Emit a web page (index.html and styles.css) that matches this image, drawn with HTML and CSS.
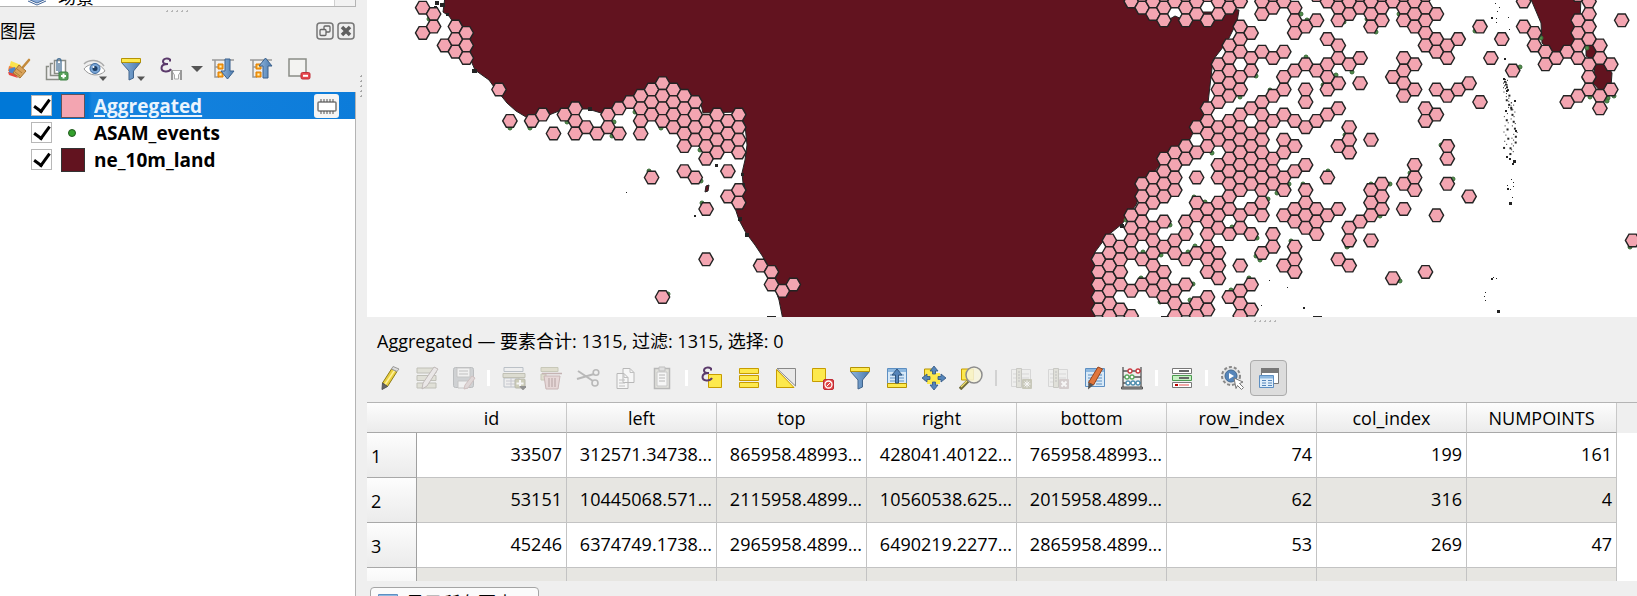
FILE: index.html
```html
<!DOCTYPE html>
<html lang="zh-CN">
<head>
<meta charset="utf-8">
<title>Aggregated</title>
<link rel="stylesheet" href="styles.css">
</head>
<body>
<svg class="defs" aria-hidden="true">
  <defs>
    <linearGradient id="blue" x1="0" x2="1"><stop offset="0" stop-color="#8fb6de"/><stop offset="1" stop-color="#4a79ad"/></linearGradient>
    <g id="funnel"><path d="M2.500 5.500L10 14v9l4.500-2v-7L21.500 5.500z" fill="url(#blue)" stroke="#42658c"/><path d="M2.500 1.500h19v4h-19z" fill="#fde94d" stroke="#b59304"/></g>
    <g id="caret"><path d="M0 0h8l-4 4.500z" fill="#555"/></g>
    <g id="epsilon"><path d="M11 4.500V2.500C9 1 4 1 4 4.500c0 2 2 2.500 5 2.500C5 7 2.500 8 2.500 11c0 4.500 7.500 4.500 9.500 1" fill="none" stroke="#5b3a6b" stroke-width="2"/></g>
    <g id="sheet"><path d="M2.500 3.500h19v18h-19z" fill="#d8e9f7" stroke="#5d8fc2"/><path d="M3 4h18v3H3z" fill="#8db8e0"/><path d="M5 10h6M5 13h6M5 16h6M5 19h6M13 10h6M13 13h6M13 16h6M13 19h6" stroke="#5d8fc2"/></g>
    <g id="tree"><path d="M1 3h22M4 3v17h4M4 10h4" fill="none" stroke="#999" stroke-width="1.500"/><path d="M7 7h5v5H7zM7 15h5v5H7z" fill="#f9a11b" stroke="#e07f00"/><path d="M8.500 8.500h2v2h-2zM8.500 16.500h2v2h-2z" fill="#fff3c4"/></g>
    <g id="column"><path d="M2.500 3.500h19v17h-19z" fill="#eeeeeb" stroke="#b9b9b9"/><path d="M4 8h16M4 12h16M4 16h12" stroke="#bbb"/><path d="M7.500 2.500h5v19h-5z" fill="#d0cfc0" stroke="#999990"/><path d="M9 6h2M9 9h2M9 12h2M9 15h2" stroke="#888"/></g>
  </defs>
</svg>
<div class="window">
  <aside class="side">
    <div class="browser">
      <svg class="browser-icon" viewBox="0 0 20 10"><path d="M1 3l9-5 9 5-9 4z" fill="#8fb0dc" stroke="#44679a"/><path d="M1 5l9 4 9-4" fill="none" stroke="#44679a"/></svg>
      <span class="browser-text">场景</span>
      <span class="scroll-end"></span>
    </div>
    <div class="grip"></div>
    <header class="side-title">
      <h2>图层</h2>
      <button class="mini" aria-label="浮动"><svg viewBox="0 0 18 18"><rect x="1" y="1" width="16" height="16" rx="3" fill="none" stroke="#777" stroke-width="1.500"/><rect x="8" y="4" width="6" height="6" rx="1" fill="none" stroke="#666" stroke-width="1.300"/><rect x="4" y="7.500" width="6" height="6" rx="1" fill="#efefef" stroke="#666" stroke-width="1.300"/></svg></button>
      <button class="mini" aria-label="关闭"><svg viewBox="0 0 18 18"><rect x="1" y="1" width="16" height="16" rx="3" fill="none" stroke="#777" stroke-width="1.500"/><path d="M5 5l8 8M13 5l-8 8" stroke="#606060" stroke-width="3.500"/></svg></button>
    </header>
    <div class="side-tools">
      <button class="tool" aria-label="样式"><svg viewBox="0 0 24 24"><path d="M4 4l10 4-4 6-8-3z" fill="#fbe34d"/><path d="M2 9l7 2-3 5-5-2z" fill="#f0803c"/><path d="M2 12l6-2 2 7-8 1z" fill="#4e86c9"/><path d="M1 15l7 2 3 4-9-3z" fill="#e8453c"/><path d="M16 10l6-7" stroke="#c48b3c" stroke-width="2.600" stroke-linecap="round"/><path d="M12 8l7 6-6 7-7-5z" fill="#d9a35a" stroke="#a8732c"/><path d="M8 15l5 4M10 12l5 4" stroke="#b17c34"/></svg></button>
      <button class="tool" aria-label="添加组"><svg viewBox="0 0 24 24"><path d="M9.500 3.500h11v13h-11z" fill="#fff" stroke="#8a8d86" stroke-width="1.500"/><path d="M8 6.500H5.500v12H17M4 9.500H1.500v13H14" fill="none" stroke="#8a8d86" stroke-width="1.500"/><path d="M12 14V4c0-3 4-3 4 0v11c0 2-2 2-2 0V6" fill="none" stroke="#4b7397" stroke-width="1.300"/><rect x="14" y="15" width="9" height="8" rx="1.500" fill="#56a05a" stroke="#3f8244"/><path d="M18.500 16.500v5M16 19h5" stroke="#fff" stroke-width="2"/></svg></button>
      <button class="tool" aria-label="可见性"><svg viewBox="0 0 24 24"><path d="M1 12C5 6 17 5 22 14 16 20 6 19 1 12z" fill="#fff" stroke="#999"/><path d="M1 7c5-5 15-5 20 2" fill="none" stroke="#aaa" stroke-width="1.500"/><circle cx="12" cy="11.500" r="5" fill="#7aa5d5" stroke="#3f6ca0"/><circle cx="12" cy="11.500" r="2.500" fill="#1d3d63"/><circle cx="10.500" cy="10" r="1" fill="#fff"/><use href="#caret" x="16" y="19.500"/></svg></button>
      <button class="tool" aria-label="过滤图例"><svg viewBox="0 0 24 24"><use href="#funnel" x="-2"/><use href="#caret" x="16" y="19.500"/></svg></button>
      <button class="tool" aria-label="表达式过滤"><svg viewBox="0 0 24 24"><use href="#epsilon"/><path d="M12.500 13.500h10L19.500 18v4h-4v-4z" fill="#fff" stroke="#aaa"/><path d="M13 13v10M22 13v10" stroke="#999" stroke-width="2"/></svg></button>
      <button class="drop" aria-label="更多"><svg viewBox="0 0 12 8"><path d="M0 1h12L6 7z" fill="#555"/></svg></button>
      <button class="tool" aria-label="全部展开"><svg viewBox="0 0 24 24"><use href="#tree"/><path d="M14 2h5v12h4l-6.500 8L10 14h4z" fill="url(#blue)" stroke="#3a618d"/></svg></button>
      <button class="tool" aria-label="全部折叠"><svg viewBox="0 0 24 24"><use href="#tree"/><path d="M14 21h5V9h4l-6.500-8L10 9h4z" fill="url(#blue)" stroke="#3a618d"/></svg></button>
      <button class="tool" aria-label="移除图层"><svg viewBox="0 0 24 24"><path d="M2 2h17v17H2z" fill="#f3f3f1" stroke="#8a8d86" stroke-width="1.500"/><rect x="14" y="15.500" width="9" height="6.500" rx="1.500" fill="#e5484d" stroke="#c22f38"/><path d="M16 18.800h5" stroke="#fff" stroke-width="2"/></svg></button>
    </div>
    <ul class="layers">
      <li class="layer selected">
        <input type="checkbox" id="l1" checked><span class="swatch pink"></span><label for="l1">Aggregated</label>
        <button class="chip" aria-label="临时图层"><svg viewBox="0 0 20 20"><rect x="1" y="6" width="18" height="9" rx="1" fill="#fff" stroke="#777" stroke-width="1.500"/><path d="M4 3v3M7 3v3M10 3v3M13 3v3M16 3v3M4 15v3M7 15v3M10 15v3M13 15v3M16 15v3" stroke="#555"/></svg></button>
      </li>
      <li class="layer"><input type="checkbox" id="l2" checked><span class="swatch"><i class="point"></i></span><label for="l2">ASAM_events</label></li>
      <li class="layer"><input type="checkbox" id="l3" checked><span class="swatch land"></span><label for="l3">ne_10m_land</label></li>
    </ul>
  </aside>
  <div class="splitter"></div>
  <main class="main">
    <svg class="map" id="map" viewBox="367 0 1270 317" preserveAspectRatio="xMinYMin slice" role="img" aria-label="地图">
      <g class="coast">
        <path d="M445-3L443 12 449 16 453 22 465 45 472 63 475 70 489 80 494 87 499 93 507 103 516 111 526 117 549 115 559 111 575 109 588 109 601 113 615 108 629 102 660 95 700 100 703 113 739 112 745 125 747 145 745 160 742 173 743 183 740 195 734 205 739 220 746 233 755 245 763 257 772 280 779 300 783 320H1095V252L1107 236 1122 224 1136 205 1143 185 1160 165 1162 157 1180 147 1188 143 1193 133 1205 118 1208 103 1213 60 1227 42 1237 22 1239 10 1225 8 1212 12 1203 12 1200 18 1182 19 1175 16 1168 20 1155 16 1135 6 1128-3z"/>
        <path d="M1530-3h51l-1 25-5 20-9 10-14 0-10-9-1-20z"/>
        <path d="M1586 48l5-4 6 4 0 8-6 3-5-3z"/>
        <path d="M1595 65l11-2 6 10-1 14-10 5-8-9z"/>
        <path d="M706 186l3-1-1 6-3 1z"/>
      </g>
      <g id="coastDots"></g>
      <g id="events"></g>
      <g id="hexes"></g>
    </svg>
    <section class="dock">
      <div class="grip dock-grip"></div>
      <h1>Aggregated — 要素合计: 1315, 过滤: 1315, 选择: 0</h1>
      <div class="dock-tools">
        <button class="tool" aria-label="编辑"><svg viewBox="0 0 24 24"><path d="M13.500 3l5.500 2.500L9.500 20.500 4.500 17z" fill="#e9cf3f" stroke="#8e7b16"/><path d="M16.500 4.500L7 18.500" stroke="#fff29a" stroke-width="1.500"/><path d="M13.500 3L15 .5l6 2.500-2 2.500z" fill="#ddd" stroke="#999"/><path d="M4.500 17l5 3.500L4 23.500z" fill="#666" stroke="#555"/></svg></button>
        <button class="tool off" aria-label="多重编辑" disabled><svg viewBox="0 0 24 24"><path d="M2 2h19v5H2zM2 9.500h19v5H2zM2 17h19v5H2z" fill="#cfcebb" stroke="#888977"/><path d="M19 1l4 2-11 17-5 3 1-6z" fill="#e4dede" stroke="#887a77"/></svg></button>
        <button class="tool off" aria-label="保存" disabled><svg viewBox="0 0 24 24"><rect x="1.500" y="1.500" width="20" height="20" rx="2" fill="#a9aeb2" stroke="#7d8286"/><path d="M5 2h13v9H5zM6 15h10v7H6z" fill="#f2f2f2" stroke="#959595"/><path d="M7 5h9M7 8h9" stroke="#888"/><path d="M20 10l3 2-7 10-4 1 1-4z" fill="#cbb" stroke="#a88"/></svg></button>
        <span class="sep"></span>
        <button class="tool off" aria-label="添加要素" disabled><svg viewBox="0 0 24 24"><path d="M2 1.500h19v4H2zM2 12h15v9H2z" fill="#eee" stroke="#7d8a98"/><path d="M1 7.500h22v4H1z" fill="#c7c7ae" stroke="#88886e"/><path d="M4 15h10M4 18h10M9 12v9" stroke="#99a"/><rect x="13" y="13" width="10" height="9" rx="1" fill="#a5a579" stroke="#78785e"/><path d="M18 14v7M14.500 17.500h7" stroke="#fff" stroke-width="2"/><path d="M17 20h8l-4 4.500z" fill="#222"/></svg></button>
        <button class="tool off" aria-label="删除" disabled><svg viewBox="0 0 24 24"><path d="M2 1.500h17v4H2zM2 8h5v6H2z" fill="#ccc9a8" stroke="#999a78"/><path d="M5 10h16l-2 13H7z" fill="#dcbcbc" stroke="#9c7070"/><path d="M3 7.500h20M10 12v9M13 12v9M16 12v9" stroke="#936b6b" stroke-width="1.500"/></svg></button>
        <button class="tool off" aria-label="剪切" disabled><svg viewBox="0 0 24 24"><path d="M2 5l15 10M1 13l17-5" stroke="#777" stroke-width="2"/><circle cx="20" cy="6.500" r="2.800" fill="none" stroke="#777" stroke-width="1.600"/><circle cx="19" cy="17" r="3" fill="none" stroke="#777" stroke-width="1.600"/></svg></button>
        <button class="tool off" aria-label="复制" disabled><svg viewBox="0 0 24 24"><path d="M10 2.500h7l4 4v10H10zM4 7.500h7l4 4v11H4z" fill="#fff" stroke="#777"/><path d="M11 7.500v4h4M17 2.500v4h4M6 14h6M6 17h6M6 20h6" fill="none" stroke="#888"/></svg></button>
        <button class="tool off" aria-label="粘贴" disabled><svg viewBox="0 0 24 24"><path d="M4.500 2.500h15v20h-15z" fill="#d4d4ca" stroke="#777" stroke-width="1.500"/><path d="M7 6h10v14H7z" fill="#fff" stroke="#999"/><path d="M9 1h6v4H9z" fill="#ccc" stroke="#888"/><path d="M9 9h6M9 12h6M9 15h6" stroke="#777"/></svg></button>
        <span class="sep"></span>
        <button class="tool" aria-label="按表达式选择"><svg viewBox="0 0 24 24"><path d="M8.500 8.500h13v13h-13z" fill="#fde94d" stroke="#c79c00"/><use href="#epsilon"/></svg></button>
        <button class="tool" aria-label="全选"><svg viewBox="0 0 24 24"><path d="M2.500 2.500h19v5h-19zM2.500 9.500h19v5h-19zM2.500 16.500h19v5h-19z" fill="#fde94d" stroke="#c79c00"/></svg></button>
        <button class="tool" aria-label="反选"><svg viewBox="0 0 24 24"><path d="M3 2.500h18.500V20z" fill="#e9e9e9" stroke="#888"/><path d="M2.500 3.500L20 21.500H2.500z" fill="#fde94d" stroke="#c79c00"/></svg></button>
        <button class="tool" aria-label="取消选择"><svg viewBox="0 0 24 24"><path d="M1.500 2.500h13v13h-13z" fill="#fde94d" stroke="#c79c00"/><rect x="12.500" y="13.500" width="10" height="10" rx="1.500" fill="#e04848" stroke="#c02a34"/><circle cx="17.500" cy="18.500" r="3.500" fill="none" stroke="#fff" stroke-width="1.300"/><path d="M15.500 20.500l4-4" stroke="#fff"/></svg></button>
        <button class="tool" aria-label="过滤"><svg viewBox="0 0 24 24"><use href="#funnel"/></svg></button>
        <button class="tool" aria-label="选择置顶"><svg viewBox="0 0 24 24"><use href="#sheet" y="-1"/><path d="M2.500 17.500h19v4h-19z" fill="#fde94d" stroke="#b59304"/><path d="M10.500 17V9H7l5-6 5 6h-3.500v8z" fill="#5585ba" stroke="#31567f"/></svg></button>
        <button class="tool" aria-label="平移到选择"><svg viewBox="0 0 24 24"><path d="M2.500 3h11v11h-11z" fill="#fde94d" stroke="#b59304"/><path d="M5 7h13v11H5z" fill="#fde94d"/><path d="M12 0l4 5h-2.500v3h-3V5H8zM12 24l4-5h-2.500v-3h-3v3H8zM0 12l5-4v2.500h3v3H5V16zM24 12l-5-4v2.500h-3v3h3V16z" fill="#5585ba" stroke="#31567f" stroke-width=".8"/></svg></button>
        <button class="tool" aria-label="缩放到选择"><svg viewBox="0 0 24 24"><path d="M2.500 3h12v11h-12z" fill="#fde94d" stroke="#c79c00"/><path d="M9 15l-8 8" stroke="#6f6a3a" stroke-width="3.500"/><path d="M8 15l-6 6" stroke="#f2e26a" stroke-width="1.200"/><circle cx="15" cy="9" r="8" fill="#f7f4dc" fill-opacity=".85" stroke="#8d8d8d" stroke-width="1.500"/></svg></button>
        <span class="sep dark"></span>
        <button class="tool off" aria-label="新建字段" disabled><svg viewBox="0 0 24 24"><use href="#column"/><rect x="13" y="13" width="10" height="10" rx="1" fill="#99997c"/><path d="M18 14.500v7M14.500 18h7M15.500 15.500l5 5M20.500 15.500l-5 5" stroke="#fff"/></svg></button>
        <button class="tool off" aria-label="删除字段" disabled><svg viewBox="0 0 24 24"><use href="#column"/><rect x="13" y="13" width="10" height="10" rx="1" fill="#b5a5a5"/><path d="M15.500 15.500l5 5M20.500 15.500l-5 5" stroke="#fff" stroke-width="2"/></svg></button>
        <button class="tool" aria-label="组织列"><svg viewBox="0 0 24 24"><use href="#sheet" y="-1"/><path d="M15 1l4.500 2L10.500 19 5.500 16.500z" fill="#e0763c" stroke="#96431a"/><path d="M5.500 16.500l5 2.500L5 23.500z" fill="#555"/></svg></button>
        <button class="tool" aria-label="字段计算器"><svg viewBox="0 0 24 24"><path d="M3 1v20M21 1v20M3 5h18M3 11h18M3 17h18" stroke="#555" stroke-width="1.300" fill="none"/><path d="M1.500 21h21v2h-21z" fill="#999" stroke="#555"/><g fill="#fff" stroke-width="1.300"><g stroke="#c93b42"><circle cx="10" cy="5" r="2"/><circle cx="18" cy="5" r="2"/></g><g stroke="#5aa85e"><circle cx="7" cy="11" r="2"/><circle cx="12" cy="11" r="2"/></g><g stroke="#4f8fb0"><circle cx="8" cy="17" r="2"/><circle cx="13" cy="17" r="2"/><circle cx="18" cy="17" r="2"/></g></g></svg></button>
        <span class="sep"></span>
        <button class="tool" aria-label="条件格式"><svg viewBox="0 0 24 24"><path d="M2.500 2.500h19v5h-19zM2.500 16.500h19v5h-19z" fill="#fff" stroke="#777"/><path d="M2.500 9.500h19v5h-19z" fill="#c6f0c2" stroke="#4c9b50"/><path d="M9 5h10M9 12h10" stroke="#666" stroke-width="2"/><path d="M5 19h3" stroke="#b00" stroke-width="2"/><path d="M9 19h10" stroke="#f3a7a7" stroke-width="2"/></svg></button>
        <span class="sep"></span>
        <button class="tool" aria-label="动作"><svg viewBox="0 0 24 24"><circle cx="11" cy="10" r="9" fill="#e4e4e4" stroke="#888" stroke-width="2" stroke-dasharray="3 2"/><circle cx="11" cy="10" r="6" fill="#5585ba" stroke="#43698f"/><path d="M9 7l5 3-5 3z" fill="#fff"/><path d="M14 12l9 4-3.500 1.500 4 4-2 2-4-4-1.500 3z" fill="#fff" stroke="#777"/></svg></button>
        <button class="tool pressed" aria-label="停靠" aria-pressed="true"><svg viewBox="0 0 24 24"><path d="M4.500 2.500h17v15h-17z" fill="#fff" stroke="#777"/><path d="M4 2h18v5H4z" fill="#777"/><path d="M2.500 9.500h14v12h-14z" fill="#e0eefa" stroke="#5d8fc2"/><path d="M3 10h13v2.500H3z" fill="#8db8e0"/><path d="M5 14.500h4M5 17h4M5 19.500h4M11 14.500h4M11 17h4M11 19.500h4" stroke="#5585ba"/></svg></button>
      </div>
      <div class="table-view">
        <table>
          <colgroup><col class="c-row"><col span="8" class="c-data"><col></colgroup>
          <thead><tr><th></th><th>id</th><th>left</th><th>top</th><th>right</th><th>bottom</th><th>row_index</th><th>col_index</th><th>NUMPOINTS</th><td></td></tr></thead>
          <tbody>
            <tr><th>1</th><td>33507</td><td>312571.34738...</td><td>865958.48993...</td><td>428041.40122...</td><td>765958.48993...</td><td>74</td><td>199</td><td>161</td><td></td></tr>
            <tr><th>2</th><td>53151</td><td>10445068.571...</td><td>2115958.4899...</td><td>10560538.625...</td><td>2015958.4899...</td><td>62</td><td>316</td><td>4</td><td></td></tr>
            <tr><th>3</th><td>45246</td><td>6374749.1738...</td><td>2965958.4899...</td><td>6490219.2277...</td><td>2865958.4899...</td><td>53</td><td>269</td><td>47</td><td></td></tr>
            <tr><th></th><td></td><td></td><td></td><td></td><td></td><td></td><td></td><td></td><td></td></tr>
          </tbody>
        </table>
      </div>
      <footer class="dock-foot">
        <button class="view-tab"><svg viewBox="0 0 24 24"><use href="#sheet"/></svg>显示所有要素</button>
      </footer>
    </section>
  </main>
</div>
<script src="map.js"></script>
</body>
</html>
```

FILE: styles.css
```css
* { box-sizing: border-box; }
body {
  margin: 0;
  height: 100vh;
  overflow: hidden;
  background: #efefef;
  color: #000;
  font: 18px/24px "Open Sans", "Noto Sans", "Noto Sans CJK SC", sans-serif;
}
h1, h2 { margin: 0; font-size: 18px; font-weight: 400; }
button { border: 0; padding: 0; background: none; font: inherit; color: inherit; }
.defs { position: absolute; width: 0; height: 0; }
.window { display: flex; height: 100%; }

.side { flex: none; width: 356px; display: flex; flex-direction: column; }
.browser {
  display: flex;
  align-items: flex-end;
  height: 7px;
  padding-left: 27px;
  overflow: hidden;
  background: #fff;
  border-right: 1px solid #b4b4b4;
  border-bottom: 1px solid #b4b4b4;
}
.browser-icon { width: 20px; height: 10px; margin-right: 11px; }
.browser-text { line-height: 18px; height: 18px; }
.scroll-end { margin-left: auto; width: 21px; height: 7px; background: #f2f2f2; border-left: 1px solid #d0d0d0; }
.grip { height: 10px; background: radial-gradient(circle, #b5b5b5 1px, transparent 1px) 0 0 / 5px 9px repeat-x; width: 26px; margin: 0 auto; }
.side-title { display: flex; align-items: center; gap: 3px; height: 28px; padding-right: 1px; }
.side-title h2 { flex: 1; }
.mini { width: 18px; height: 18px; }
.mini svg { display: block; }
.side-tools { display: flex; align-items: center; height: 47px; }
.tool { flex: none; width: 37px; height: 36px; display: grid; place-items: center; }
.side-tools .tool { width: 38px; }
.tool svg { width: 24px; height: 24px; }
.off svg { opacity: .45; }
.drop { width: 14px; display: grid; place-items: center; }
.drop svg { width: 12px; height: 8px; }
.layers {
  flex: 1;
  margin: 0;
  padding: 0;
  list-style: none;
  background: #fff;
  border-right: 1px solid #b4b4b4;
}
.layer { display: flex; align-items: center; height: 27px; padding: 0 16px 0 31px; font-size: 19px; font-weight: 700; }
.selected { background: linear-gradient(90deg, #0078d7 88px, #1683de 92px, #0c7cda); color: #eaf4fd; }
.selected label { text-decoration: underline; text-decoration-thickness: 2px; text-underline-offset: 2px; }
.layer input {
  appearance: none;
  width: 21px;
  height: 21px;
  margin: 0 9px 0 0;
  border: 1px solid #b8b8b8;
  background: #fff;
  display: grid;
  place-items: center;
}
.layer input:checked::after {
  content: "";
  width: 7px;
  height: 13px;
  border: solid #000;
  border-width: 0 3px 3px 0;
  transform: rotate(36deg);
  margin-bottom: 3px;
}
.swatch { width: 24px; height: 24px; margin-right: 9px; display: grid; place-items: center; }
.pink { background: #f3a5b1; border: 1px solid #62525a; }
.land { background: #62131f; border: 1px solid #333; }
.point { width: 8px; height: 8px; margin-right: 3px; border-radius: 50%; background: #33a02c; border: 1px solid #235a20; }
.chip { margin-left: auto; width: 25px; height: 24px; border-radius: 3px; background: #f4f4f4; display: grid; place-items: center; }
.chip svg { width: 20px; height: 20px; }

.splitter { flex: none; width: 11px; padding-top: 74px; }
.splitter::before { content: ""; display: block; height: 25px; background: radial-gradient(circle, #a8a8a8 1px, transparent 1px) 1px 0 / 9px 5px repeat-y; }
.main { flex: 1; min-width: 0; display: flex; flex-direction: column; }
.map { flex: 1; min-height: 0; width: 100%; background: #fff; display: block; }
.coast path { fill: #62131f; stroke: #232323; }
#coastDots { fill: #232323; }
#events { fill: #4f8f4a; stroke: #3c6a39; stroke-width: 1; }
#hexes { fill: #f3a5b1; stroke: #232323; stroke-width: 1.4px; }

.dock { flex: none; }
.dock-grip { margin-right: 358px; }
.dock h1 { padding: 2px 0 0 10px; line-height: 24px; }
.dock-tools { display: flex; align-items: center; height: 49px; padding: 0 0 0 4px; }
.sep { flex: none; width: 13px; height: 16px; background: linear-gradient(#fff, #fff) center / 3px 100% no-repeat; }
.sep.dark { background-image: linear-gradient(#d2d2d2, #d2d2d2); background-size: 2px 100%; }
.pressed { border: 1px solid #ababab; border-radius: 4px; background: #dcdcdc; }
.table-view { height: 179px; overflow: hidden; border-top: 1px solid #b4b4b4; background: #fff; }
table { width: 100%; table-layout: fixed; border-collapse: separate; border-spacing: 0; }
.c-row { width: 50px; }
.c-data { width: 150px; }
th { font-weight: 400; background: linear-gradient(#fdfdfd, #ebebeb); }
thead th { height: 30px; padding: 0; border-right: 1px solid #c8c8c8; border-bottom: 1px solid #a8a8a8; }
thead th:first-child { border-right: 0; }
thead td { background: #efefef; }
tbody th { height: 45px; padding: 1px 4px 0; text-align: left; border-right: 1px solid #a0a0a0; border-bottom: 1px solid #a8a8a8; }
tbody td { padding: 0 4px 2px 0; text-align: right; white-space: nowrap; border-right: 1px solid #c3c3c3; border-bottom: 1px solid #c3c3c3; }
tbody tr:nth-child(even) td { background: #e7e6e2; }
tbody tr td:last-child { border: 0; background: #fff; }
.dock-foot { height: 15px; padding: 6px 0 0 3px; overflow: hidden; }
.view-tab { display: flex; align-items: flex-start; gap: 6px; height: 34px; padding: 3px 24px 0 5px; border: 1px solid #a5a5a5; border-radius: 4px; background: #fbfbfb; }
.view-tab svg { width: 24px; height: 24px; }
```

FILE: map.js
```js
// Hexagon rows per grid column; a row step is half the height of a hexagon.
const columns = {
  0: [0, 4], 1: [1, 3], 2: [6], 3: [3, 5, 7], 4: [4, 6, 8], 7: [13], 8: [18], 10: [18], 11: [17], 12: [20],
  13: [17], 14: [16, 18, 20], 15: [19], 16: [20], 17: [17, 19], 18: [16, 20], 19: [15], 20: [14, 16, 18, 20],
  21: [13, 15, 17, 27], 22: [12, 14, 16, 18, 46], 23: [13, 15, 17, 19], 24: [14, 16, 18, 20, 22, 26],
  25: [15, 17, 19, 21, 27], 26: [18, 20, 22, 24, 32, 40], 27: [17, 19, 21, 23], 28: [18, 20, 22, 26, 30],
  29: [17, 19, 21, 23, 29, 31], 31: [41], 32: [42, 44], 33: [45], 34: [44],
  62: [40, 42, 44, 46, 48], 63: [37, 39, 41, 43, 45, 47, 49], 64: [38, 40, 42, 44, 48],
  65: [-1, 33, 35, 37, 39, 45, 49], 66: [-2, 0, 28, 30, 32, 34, 36, 40, 44],
  67: [-1, 1, 27, 29, 31, 35, 37, 39, 41, 43, 45], 68: [-2, 0, 2, 24, 26, 28, 30, 34, 38, 42, 44, 46],
  69: [-1, 23, 25, 27, 29, 37, 39, 45, 47, 49], 70: [-2, 0, 2, 22, 24, 34, 36, 40, 44, 48],
  71: [-1, 1, 19, 23, 27, 31, 33, 39, 47, 49],
  72: [-2, 2, 16, 18, 20, 22, 32, 34, 36, 38, 40, 42, 46, 48],
  73: [-1, 1, 9, 11, 13, 15, 19, 21, 25, 27, 31, 33, 35, 39, 41, 43],
  74: [-2, 0, 6, 8, 10, 12, 14, 18, 20, 22, 24, 26, 28, 30, 32, 36, 46],
  75: [-1, 3, 5, 7, 11, 13, 17, 19, 21, 23, 25, 27, 29, 33, 35, 41, 45, 47, 49],
  76: [4, 8, 10, 16, 20, 22, 24, 26, 28, 32, 36, 44, 48],
  77: [-1, 1, 7, 15, 17, 19, 21, 23, 25, 27, 29, 31, 33, 39], 78: [-2, 0, 8, 14, 18, 24, 26, 28, 36, 38],
  79: [-1, 7, 11, 13, 17, 21, 23, 27, 29, 33, 41], 80: [0, 2, 4, 10, 18, 22, 26, 32, 34, 38, 40, 42],
  81: [3, 9, 13, 15, 19, 25, 29, 31, 33, 35], 82: [-2, 2, 10, 18, 32, 34, 36],
  83: [-1, 5, 9, 11, 13, 17, 27, 33], 84: [-2, 0, 2, 6, 8, 12, 16, 22, 32, 40],
  85: [-1, 1, 9, 19, 21, 23, 35, 37, 41], 86: [-2, 0, 8, 12, 34], 87: [-1, 1, 3, 21, 29, 31, 33, 37],
  88: [-2, 0, 2, 28, 30, 32], 89: [-1, 11, 43], 90: [-2, 0, 2, 8, 10, 12, 14, 28, 32],
  91: [-1, 1, 3, 9, 13, 25, 27, 29], 92: [-2, 0, 2, 4, 6, 16, 18, 42], 93: [1, 5, 7, 13, 17, 33],
  94: [6, 8, 14, 22, 24, 28], 95: [5, 13], 96: [12, 30], 97: [3, 15], 98: [8], 99: [5], 100: [10],
  101: [-1, 3], 102: [4, 6], 103: [7, 9], 104: [8], 105: [7, 15], 106: [-2, 2, 4, 6, 8, 14],
  107: [-1, 1, 3, 5, 9, 11, 13], 108: [6, 8, 14, 16], 109: [9, 13], 110: [2], 111: [37]
};
const hexes = [];
for (const [col, rows] of Object.entries(columns)) {
  const x = 422.7 + col * 10.9;
  for (const row of rows) {
    const y = 7.7 + row * 6.29;
    hexes.push(`<path d="M${(x - 7.2).toFixed(1)} ${y.toFixed(1)}l3.600-6.290h7.200l3.600 6.290-3.600 6.290h-7.200z"/>`);
  }
}
document.getElementById("hexes").innerHTML = hexes.join("");

// Event points that show from behind the hexagons.
const events = [[429, 19], [510, 128], [530, 128], [567, 122], [612, 136], [635, 112], [614, 122], [661, 128], [700, 150],
  [649, 171], [701, 181], [702, 203], [668, 294], [1301, 14], [1307, 20], [1306, 57], [1352, 72], [1256, 76], [1240, 97],
  [1270, 90], [1212, 153], [1344, 128], [1345, 135], [1323, 85], [1336, 75], [1194, 197], [1205, 202], [1126, 220],
  [1268, 199], [1277, 193], [1289, 184], [1328, 171], [1303, 184], [1232, 227], [1257, 238], [1256, 256], [1260, 260],
  [1291, 241], [1195, 246], [1188, 252], [1143, 252], [1161, 255], [1141, 278], [1193, 284], [1190, 300], [1160, 302],
  [1249, 278], [1231, 290], [1348, 246], [1347, 247], [1170, 225], [1399, 14], [1376, 32], [1344, 22], [1367, 19],
  [1475, 31], [1520, 67], [1541, 38], [1584, 78], [1590, 97], [1614, 96], [1608, 98], [1607, 101],
  [1441, 145], [1390, 184], [1410, 173], [1453, 179], [1380, 216], [1371, 184], [1400, 281],
  [1630, 247], [1587, 48], [1275, 122]];
document.getElementById("events").innerHTML =
  events.map(([x, y]) => `<circle cx="${x}" cy="${y}" r="2"/>`).join("");

// Atolls and rocks: x, y, size.
const rocks = [[1495, 3, 1], [1499, 7, 1], [1497, 11, 1], [1491, 17, 2], [1496, 18, 1], [1508, 17, 1], [1496, 22, 1],
  [1509, 29, 1], [1504, 58, 2], [626, 192, 1], [694, 215, 2], [715, 164, 3], [1269, 280, 1], [1287, 287, 1],
  [1303, 307, 2], [1261, 305, 1], [767, 316, 9], [1313, 316, 9], [1161, 316, 8], [1509, 202, 3], [1512, 197, 1],
  [1497, 310, 3], [1491, 278, 2], [1493, 277, 1], [1496, 278, 1], [1485, 292, 1], [1484, 296, 1], [1485, 300, 1],
  [1506, 156, 2], [1509, 158, 2], [1513, 160, 3], [1512, 163, 2], [1511, 179, 1], [1513, 182, 1], [1513, 186, 1],
  [1507, 185, 1], [1507, 188, 2], [1510, 189, 1], [1120, 224, 4], [472, 69, 5], [588, 107, 4],
  [738, 217, 4], [745, 233, 4], [741, 183, 4], [741, 173, 3], [440, 3, 5], [435, 1, 4], [434, 6, 3], [446, 13, 3]];
const chains = [[1505, 78, 1505, 90], [1505, 90, 1511, 110], [1506, 110, 1505, 150], [1512, 100, 1513, 130], [1515, 130, 1510, 155]];
chains.forEach(([x1, y1, x2, y2], n) => {
  for (let i = 0; i < 13; i++) {
    const t = i / 13;
    const dx = ((i * 7 + n * 3) % 5) - 2;
    rocks.push([x1 + (x2 - x1) * t + dx, y1 + (y2 - y1) * t, 1 + (i % 3 === 0 ? 1 : 0)]);
  }
});
document.getElementById("coastDots").innerHTML =
  rocks.map(([x, y, s]) => `<rect x="${x}" y="${y}" width="${s}" height="${Math.min(s, 4)}"/>`).join("");
```
